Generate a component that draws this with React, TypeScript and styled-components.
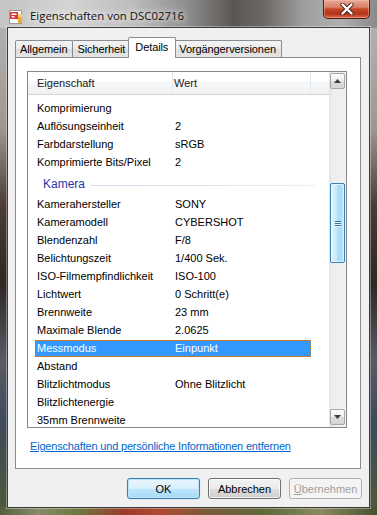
import styled, { createGlobalStyle, css } from "styled-components";

type Prop = { name: string; value?: string; selected?: boolean };
type Item = { group: string } | Prop;

const items: Item[] = [
    { name: "Komprimierung" },
    { name: "Auflösungseinheit", value: "2" },
    { name: "Farbdarstellung", value: "sRGB" },
    { name: "Komprimierte Bits/Pixel", value: "2" },
    { group: "Kamera" },
    { name: "Kamerahersteller", value: "SONY" },
    { name: "Kameramodell", value: "CYBERSHOT" },
    { name: "Blendenzahl", value: "F/8" },
    { name: "Belichtungszeit", value: "1/400 Sek." },
    { name: "ISO-Filmempfindlichkeit", value: "ISO-100" },
    { name: "Lichtwert", value: "0 Schritt(e)" },
    { name: "Brennweite", value: "23 mm" },
    { name: "Maximale Blende", value: "2.0625" },
    { name: "Messmodus", value: "Einpunkt", selected: true },
    { name: "Abstand" },
    { name: "Blitzlichtmodus", value: "Ohne Blitzlicht" },
    { name: "Blitzlichtenergie" },
    { name: "35mm Brennweite" },
];

const tabs = ["Allgemein", "Sicherheit", "Details", "Vorgängerversionen"];

const GlobalStyle = createGlobalStyle`
    html, body {
        margin: 0;
        padding: 0;
    }
    body {
        font-family: "Liberation Sans", Arial, sans-serif;
        font-size: 11px;
        color: #000;
    }
`;

const PropsIcon = () => (
    <svg width="16" height="16" viewBox="0 0 16 16">
        <rect x="1.5" y="1.5" width="12" height="13" fill="#fdfdfd" stroke="#9a9a9a" />
        <rect x="2" y="3" width="8" height="7" fill="#d83a3a" />
        <rect x="3.5" y="4.5" width="5" height="1.5" fill="#fff" />
        <rect x="3.5" y="7" width="3" height="1.5" fill="#fff" />
        <rect x="10" y="5" width="4" height="9" fill="#f4ad2a" />
        <rect x="10" y="5" width="4" height="3" fill="#fbd46a" />
    </svg>
);

const CloseX = () => (
    <svg width="14" height="12" viewBox="0 0 14 12">
        <path d="M2.5 1.5 L11.5 10.5 M11.5 1.5 L2.5 10.5" stroke="#4a2216" strokeWidth="4.2" strokeLinecap="round" />
        <path d="M2.5 1.5 L11.5 10.5 M11.5 1.5 L2.5 10.5" stroke="#fff" strokeWidth="2.4" strokeLinecap="round" />
    </svg>
);

const Arrow = ({ down }: { down?: boolean }) => (
    <svg width="7" height="4" viewBox="0 0 7 4">
        <path d={down ? "M0 0 H7 L3.5 4 Z" : "M0 4 H7 L3.5 0 Z"} fill="#3d3d3d" />
    </svg>
);

export default function App() {
    return (
        <>
            <GlobalStyle />
            <Window>
                <TitleBar>
                    <TitleIcon><PropsIcon /></TitleIcon>
                    <TitleText>Eigenschaften von DSC02716</TitleText>
                    <CloseButton><CloseX /></CloseButton>
                </TitleBar>
                <Client>
                    <TabStrip>
                        {tabs.map(t => (
                            <Tab key={t} $active={t === "Details"}>{t}</Tab>
                        ))}
                    </TabStrip>
                    <Panel>
                        <ListView>
                            <ListContent>
                                <Header>
                                    <HeaderCell $width={145}>Eigenschaft</HeaderCell>
                                    <HeaderCell $width={138}>Wert</HeaderCell>
                                    <HeaderRest />
                                </Header>
                                <Body>
                                    {items.map((it, i) =>
                                        "group" in it ? (
                                            <Group key={i}>
                                                <GroupTitle>{it.group}</GroupTitle>
                                                <GroupLine />
                                            </Group>
                                        ) : (
                                            <Row key={i} $selected={it.selected}>
                                                <Cell>{it.name}</Cell>
                                                <Cell>{it.value}</Cell>
                                            </Row>
                                        )
                                    )}
                                </Body>
                            </ListContent>
                            <ScrollBar>
                                <ScrollButton><Arrow /></ScrollButton>
                                <Thumb $offset={94}>
                                    <Grip><span /><span /><span /></Grip>
                                </Thumb>
                                <ScrollButton $bottom><Arrow down /></ScrollButton>
                            </ScrollBar>
                        </ListView>
                        <Link href="#">Eigenschaften und persönliche Informationen entfernen</Link>
                    </Panel>
                    <ButtonRow>
                        <DlgButton $default>OK</DlgButton>
                        <DlgButton>Abbrechen</DlgButton>
                        <DlgButton disabled><u>Ü</u>bernehmen</DlgButton>
                    </ButtonRow>
                </Client>
            </Window>
        </>
    );
}

const Window = styled.div`
    width: 377px;
    height: 515px;
    box-sizing: border-box;
    padding: 0 7px 7px 7px;
    display: flex;
    flex-direction: column;
    background:
        linear-gradient(90deg, #c4c4c4 0%, #d4d4d4 18%, #bdbdbd 35%, #8c8c8c 50%, #5a5654 62%, #6c6866 70%, #9c9c9c 80%, #b0b0b0 90%, #8a8a8a 100%) top / 100% 28px no-repeat,
        linear-gradient(90deg, #55603a 0%, #8a8a6a 10%, #6c7a40 20%, #9a3a2a 33%, #b04a30 42%, #7a5a3a 55%, #5e6a38 70%, #8a8a60 85%, #4a5030 100%) bottom / 100% 8px no-repeat,
        linear-gradient(180deg, #b8b8b8 0%, #9e9690 25%, #4a3c34 40%, #2e2824 55%, #5a5a64 70%, #3e4a5a 82%, #4e5a38 100%);
`;

const TitleBar = styled.div`
    height: 27px;
    display: flex;
    align-items: flex-start;
    margin: 0 -7px;
    padding: 0 7px 0 8px;
    flex-shrink: 0;
`;

const TitleIcon = styled.div`
    margin-top: 9px;
    width: 16px;
    height: 16px;
`;

const TitleText = styled.div`
    margin: 8px 0 0 6px;
    font-family: "Open Sans", "Liberation Sans", sans-serif;
    font-size: 11.4px;
    line-height: 16px;
    color: #101010;
    text-shadow: 0 0 6px #fff, 0 0 10px #fff;
`;

const CloseButton = styled.div`
    margin-left: auto;
    width: 47px;
    height: 19px;
    box-sizing: border-box;
    border: 1px solid #4c1c12;
    border-top: none;
    border-radius: 0 0 5px 5px;
    background: linear-gradient(180deg, #e8a896 0%, #d9806a 40%, #c44828 50%, #b2341a 75%, #d66846 100%);
    box-shadow: inset 0 0 0 1px rgba(255, 200, 180, 0.45);
    display: flex;
    align-items: center;
    justify-content: center;
`;

const Client = styled.div`
    flex: 1;
    display: flex;
    flex-direction: column;
    background: #f0f0f0;
    border: 1px solid #3c3c3c;
    box-shadow: 0 0 0 1px rgba(255, 255, 255, 0.35);
`;

const TabStrip = styled.div`
    display: flex;
    align-items: flex-end;
    height: 20px;
    padding: 9px 0 0 7px;
    position: relative;
    z-index: 1;
`;

const Tab = styled.div<{ $active?: boolean }>`
    height: 17px;
    box-sizing: border-box;
    padding: 0 5px 0 4px;
    line-height: 16px;
    letter-spacing: -0.1px;
    border: 1px solid #898c95;
    border-bottom: none;
    border-radius: 2px 2px 0 0;
    background: linear-gradient(180deg, #f3f3f3 0%, #ebebeb 50%, #dedede 51%, #e4e4e4 100%);
    margin-right: -1px;
    ${p => p.$active && css`
        height: 21px;
        margin: 0 -2px -1px -2px;
        padding: 0 7px 0 6px;
        line-height: 18px;
        background: #fff;
        position: relative;
        z-index: 2;
    `}
`;

const Panel = styled.div`
    height: 412px;
    box-sizing: border-box;
    margin: 0 8px 0 7px;
    padding: 13px 0 0 11px;
    border: 1px solid #898c95;
    background: #fff;
    display: flex;
    flex-direction: column;
`;

const ListView = styled.div`
    width: 320px;
    height: 357px;
    box-sizing: border-box;
    border: 1px solid #828790;
    display: flex;
    overflow: hidden;
`;

const ListContent = styled.div`
    flex: 1;
    display: flex;
    flex-direction: column;
    min-width: 0;
`;

const Header = styled.div`
    height: 23px;
    box-sizing: border-box;
    display: flex;
    border-bottom: 1px solid #d5d5d5;
    background: linear-gradient(180deg, #ffffff 0%, #ffffff 40%, #f7f8fa 41%, #f1f2f4 100%);
    flex-shrink: 0;
`;

const HeaderCell = styled.div<{ $width: number }>`
    width: ${p => p.$width}px;
    box-sizing: border-box;
    padding-left: 9px;
    line-height: 22px;
    border-right: 1px solid #e3e8ee;
    color: #1a1a1a;
    &:nth-child(2) {
        padding-left: 1px;
    }
`;

const HeaderRest = styled.div`
    flex: 1;
`;

const Body = styled.div`
    padding-top: 4px;
    display: flex;
    flex-direction: column;
`;

const Row = styled.div<{ $selected?: boolean }>`
    height: 17px;
    margin: 1px 0 0 7px;
    width: 276px;
    box-sizing: border-box;
    border: 1px dotted transparent;
    display: grid;
    grid-template-columns: 138px 1fr;
    line-height: 15px;
    flex-shrink: 0;
    ${p => p.$selected && css`
        background: #3399ff;
        border-color: #c87428;
        color: #fff;
    `}
`;

const Cell = styled.div`
    padding-left: 1px;
    white-space: nowrap;
    overflow: hidden;
`;

const Group = styled.div`
    height: 24px;
    display: flex;
    align-items: center;
    padding: 2px 13px 0 15px;
    box-sizing: border-box;
    gap: 6px;
    flex-shrink: 0;
`;

const GroupTitle = styled.span`
    color: #2a34a8;
    font-size: 12px;
`;

const GroupLine = styled.div`
    flex: 1;
    height: 1px;
    margin-top: 2px;
    background: linear-gradient(90deg, #d3dcea 0%, #e2e8f1 70%, #edf1f6 100%);
`;

const ScrollBar = styled.div`
    width: 17px;
    display: flex;
    flex-direction: column;
    background: linear-gradient(90deg, #e3e3e3 0%, #eeeeee 20%, #f0f0f0 100%);
    flex-shrink: 0;
`;

const ScrollButton = styled.div<{ $bottom?: boolean }>`
    height: 16px;
    margin: 1px 1px 0 1px;
    box-sizing: border-box;
    border: 1px solid #a7a7a7;
    border-radius: 2px;
    background: linear-gradient(180deg, #fcfcfc 0%, #ececec 50%, #dcdcdc 51%, #d6d6d6 100%);
    display: flex;
    align-items: center;
    justify-content: center;
    ${p => p.$bottom && css`
        margin-top: auto;
        margin-bottom: 2px;
    `}
`;

const Thumb = styled.div<{ $offset: number }>`
    margin: ${p => p.$offset}px 1px 0 1px;
    height: 80px;
    box-sizing: border-box;
    border: 1px solid #3c7fb1;
    border-radius: 2px;
    background: linear-gradient(90deg, #e3f4fc 0%, #c4e7f9 45%, #a9dbf6 55%, #b9e2f8 100%);
    box-shadow: inset 0 0 0 1px rgba(255, 255, 255, 0.6);
    display: flex;
    align-items: center;
    justify-content: center;
`;

const Grip = styled.div`
    display: flex;
    flex-direction: column;
    gap: 1px;
    span {
        width: 6px;
        height: 1px;
        background: #3a6f98;
        box-shadow: 0 1px 0 #e8f6fd;
    }
`;

const Link = styled.a`
    margin: 11px 0 0 3px;
    line-height: 15px;
    letter-spacing: -0.18px;
    color: #0066cc;
    text-decoration: underline;
    align-self: flex-start;
`;

const ButtonRow = styled.div`
    display: flex;
    justify-content: flex-end;
    gap: 8px;
    padding: 9px 7px 8px 0;
`;

const DlgButton = styled.button<{ $default?: boolean }>`
    width: 73px;
    height: 21px;
    padding: 0;
    font-family: "Liberation Sans", Arial, sans-serif;
    font-size: 11px;
    color: #000;
    border: 1px solid #707070;
    border-radius: 3px;
    background: linear-gradient(180deg, #f2f2f2 0%, #ebebeb 50%, #dddddd 51%, #cfcfcf 100%);
    box-shadow: inset 0 0 0 1px rgba(255, 255, 255, 0.7);
    ${p => p.$default && css`
        border-color: #3c7fb1;
        background: linear-gradient(180deg, #eaf6fd 0%, #d9f0fc 50%, #bee6fd 51%, #a7d9f5 100%);
        box-shadow: inset 0 0 0 1px #bfe4f8, 0 0 1px #8cc8ee;
    `}
    &:disabled {
        color: #a0a0a0;
        border-color: #adb2b5;
        background: #f4f4f4;
        box-shadow: none;
    }
    u {
        text-decoration: underline;
    }
`;
